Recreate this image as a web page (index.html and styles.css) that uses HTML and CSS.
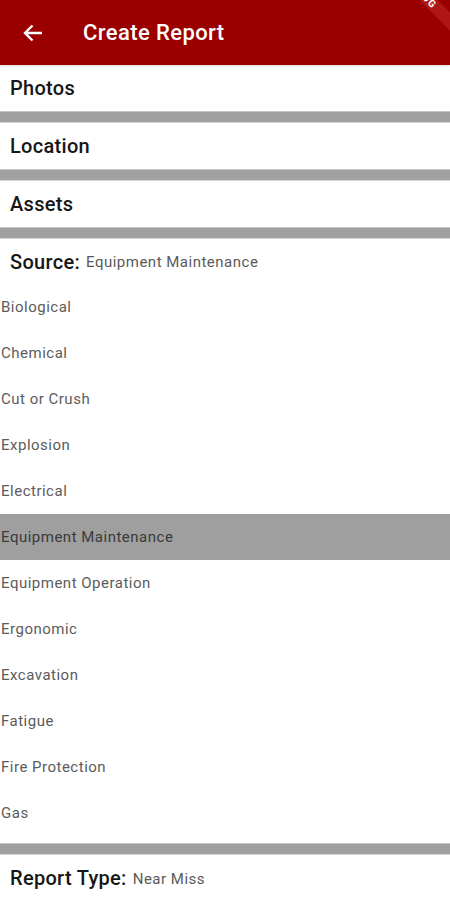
FILE: index.html
```html
<!DOCTYPE html>
<html>
<head>
<meta charset="utf-8">
<link rel="stylesheet" href="styles.css">
</head>
<body>
<header class="appbar">
  <svg class="back" width="20" height="18" viewBox="0 0 20 18"><path d="M19 9H2M9.5 1.5L2 9l7.5 7.5" fill="none" stroke="#fff" stroke-width="2.4" stroke-linejoin="miter"/></svg>
  <h1 class="title">Create Report</h1>
  <div class="banner">DEBUG</div>
</header>
<div class="section"><span class="label">Photos</span></div>
<div class="divider"></div>
<div class="section"><span class="label">Location</span></div>
<div class="divider"></div>
<div class="section"><span class="label">Assets</span></div>
<div class="divider"></div>
<div class="section source"><span class="label">Source:</span><span class="value">Equipment Maintenance</span></div>
<ul class="list">
  <li>Biological</li>
  <li>Chemical</li>
  <li>Cut or Crush</li>
  <li>Explosion</li>
  <li>Electrical</li>
  <li class="selected">Equipment Maintenance</li>
  <li>Equipment Operation</li>
  <li>Ergonomic</li>
  <li>Excavation</li>
  <li>Fatigue</li>
  <li>Fire Protection</li>
  <li>Gas</li>
</ul>
<div class="divider"></div>
<div class="section report"><span class="label">Report Type:</span><span class="value">Near Miss</span></div>
</body>
</html>
```
FILE: styles.css
```css
html, body {
  margin: 0;
  padding: 0;
  background: #fff;
  font-family: Roboto, "Noto Sans", sans-serif;
  width: 450px;
  height: 900px;
  overflow: hidden;
}
.appbar {
  position: relative;
  height: 65px;
  background: #9b0000;
  display: flex;
  align-items: center;
  overflow: hidden;
  box-shadow: 0 1px 2px rgba(0,0,0,0.15);
}
.back {
  margin-left: 23px;
  flex: none;
}
.title {
  margin: 0 0 0 40px;
  color: #fff;
  font-size: 22px;
  font-weight: 500;
  letter-spacing: 0.4px;
}
.banner {
  position: absolute;
  left: 352px;
  top: -13px;
  width: 140px;
  height: 13px;
  line-height: 13px;
  transform: rotate(45deg);
  background: rgba(190, 40, 40, 0.55);
  color: #fff;
  font-size: 10px;
  font-weight: 700;
  text-align: center;
  letter-spacing: 1px;
}
.section {
  height: 46px;
  display: flex;
  align-items: center;
  padding-left: 10px;
  background: #fff;
}
.label {
  font-size: 20px;
  font-weight: 500;
  color: #161616;
  letter-spacing: 0.3px;
}
.value {
  font-size: 15px;
  color: #5a5a5a;
  margin-left: 6px;
  padding-top: 1px;
  letter-spacing: 0.5px;
}
.source {
  height: 45px;
}
.divider {
  height: 10px;
  background: #a0a0a0;
  border-top: 1px solid #c4c4c4;
  border-bottom: 1px solid #d6d6d6;
}
.list {
  list-style: none;
  margin: 0;
  padding: 0 0 7px 0;
}
.list li {
  height: 46px;
  display: flex;
  align-items: center;
  padding-left: 1px;
  font-size: 15px;
  color: #5c5c5c;
  letter-spacing: 0.5px;
}
.list li.selected {
  background: #9f9f9f;
  color: #3a3a3a;
}
```
